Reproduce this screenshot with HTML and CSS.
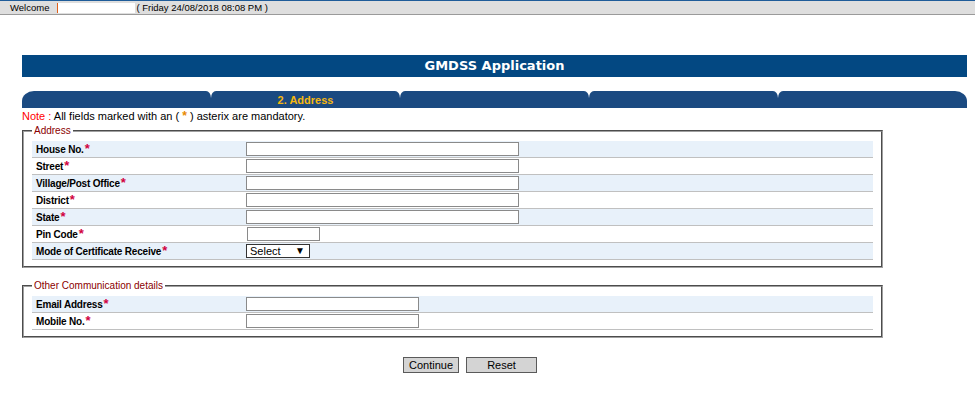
FILE: index.html
```html
<!DOCTYPE html>
<html lang="en">
<head>
    <meta charset="UTF-8">
    <title>GMDSS Application</title>
    <link rel="stylesheet" href="styles.css">
</head>
<body>
    <div class="topbar">
        <span class="welcome">Welcome</span>
        <span class="user-name"></span>
        <span class="login-time">( Friday 24/08/2018 08:08 PM )</span>
    </div>

    <div class="page">
        <div class="title-bar">GMDSS Application</div>

        <div class="steps">
            <div class="step step-first"></div>
            <div class="step step-active">2. Address</div>
            <div class="step"></div>
            <div class="step"></div>
            <div class="step step-last"></div>
        </div>

        <div class="note">
            <span class="note-key">Note :</span> All fields marked with an ( <span class="note-star">*</span> ) asterix are mandatory.
        </div>

        <fieldset class="group">
            <legend>Address</legend>
            <table class="form-table">
                <tr class="row-alt">
                    <td class="label">House No.<span class="req">*</span></td>
                    <td><input type="text" class="field field-long"></td>
                </tr>
                <tr>
                    <td class="label">Street<span class="req">*</span></td>
                    <td><input type="text" class="field field-long"></td>
                </tr>
                <tr class="row-alt">
                    <td class="label">Village/Post Office<span class="req">*</span></td>
                    <td><input type="text" class="field field-long"></td>
                </tr>
                <tr>
                    <td class="label">District<span class="req">*</span></td>
                    <td><input type="text" class="field field-long"></td>
                </tr>
                <tr class="row-alt">
                    <td class="label">State<span class="req">*</span></td>
                    <td><input type="text" class="field field-long"></td>
                </tr>
                <tr>
                    <td class="label">Pin Code<span class="req">*</span></td>
                    <td><input type="text" class="field field-short"></td>
                </tr>
                <tr class="row-alt">
                    <td class="label">Mode of Certificate Receive<span class="req">*</span></td>
                    <td>
                        <span class="select-wrap">
                            <select class="select">
                                <option>Select</option>
                                <option>By Post</option>
                                <option>In Person</option>
                            </select>
                            <span class="select-arrow">&#9660;</span>
                        </span>
                    </td>
                </tr>
            </table>
        </fieldset>

        <fieldset class="group group-second">
            <legend>Other Communication details</legend>
            <table class="form-table">
                <tr class="row-alt">
                    <td class="label">Email Address<span class="req">*</span></td>
                    <td><input type="text" class="field field-mid"></td>
                </tr>
                <tr>
                    <td class="label">Mobile No.<span class="req">*</span></td>
                    <td><input type="text" class="field field-mid"></td>
                </tr>
            </table>
        </fieldset>

        <div class="actions">
            <button type="button" class="btn">Continue</button>
            <button type="button" class="btn btn-reset">Reset</button>
        </div>
    </div>
</body>
</html>
```

FILE: styles.css
```css
body {
    margin: 0;
    font-family: "Liberation Sans", Arial, sans-serif;
    font-size: 10px;
    color: #000;
    background: #fff;
}

.topbar {
    height: 13px;
    border-top: 1px solid #1f5c99;
    border-bottom: 1px solid #9a9a9a;
    background-color: #dedede;
    padding-left: 10px;
    display: flex;
    align-items: center;
    font-size: 9.5px;
    line-height: 13px;
}

.user-name {
    display: inline-block;
    width: 77px;
    height: 10px;
    margin-left: 8px;
    background-color: #fff;
    border-left: 1px solid #e0601a;
}

.login-time {
    margin-left: 1px;
}

.page {
    padding: 40px 8px 0 22px;
}

.title-bar {
    height: 22px;
    line-height: 22px;
    background-color: #034882;
    color: #fff;
    text-align: center;
    font-family: "DejaVu Sans", Verdana, sans-serif;
    font-weight: bold;
    font-size: 13px;
}

.steps {
    display: flex;
    height: 17px;
    margin-top: 14px;
}

.step {
    flex: 1;
    background-color: #1b4a81;
    border-radius: 5px 5px 0 0 / 7px 7px 0 0;
    color: #f5b70f;
    font-weight: bold;
    font-size: 11px;
    text-align: center;
    line-height: 17px;
    padding-top: 1px;
    box-sizing: border-box;
}

.step-first {
    border-radius: 12px 5px 0 0 / 10px 7px 0 0;
}

.step-last {
    border-radius: 5px 12px 0 0 / 7px 10px 0 0;
}

.note {
    margin-top: 1px;
    font-size: 11px;
    line-height: 14px;
    height: 16px;
}

.note-key {
    color: #f00;
}

.note-star {
    color: #e88a00;
    font-weight: bold;
    font-size: 12px;
}

.group {
    width: 861px;
    box-sizing: border-box;
    margin: 0;
    padding: 4px 8px 6px 8px;
    border: 2px groove #a0a0a0;
}

.group legend {
    padding: 0 2px;
    margin-left: 0;
    color: #8b0000;
    font-size: 10px;
    line-height: 12px;
}

.group-second {
    margin-top: 12px;
}

.form-table {
    width: 841px;
    border-collapse: collapse;
}

.form-table td {
    height: 16px;
    padding: 0;
    border-bottom: 1px solid #c0c0c0;
    vertical-align: middle;
}

.form-table .label {
    width: 210px;
    padding-left: 4px;
    font-weight: bold;
    font-size: 10px;
    letter-spacing: -0.2px;
}

.row-alt td {
    background-color: #e8f1fa;
}

.req {
    color: #d1003f;
    font-size: 13px;
    line-height: 10px;
    margin-left: 1px;
}

.field {
    display: block;
    height: 14px;
    box-sizing: border-box;
    margin: 0;
    padding: 0 2px;
    border: 1px solid #8a8a8a;
    background: #fff;
    font-family: "Liberation Sans", Arial, sans-serif;
    font-size: 11px;
}

.field-long {
    width: 273px;
}

.field-short {
    width: 73px;
    margin-left: 1px;
}

.field-mid {
    width: 173px;
}

.select-wrap {
    position: relative;
    display: block;
    width: 64px;
}

.select {
    display: block;
    width: 64px;
    height: 14px;
    box-sizing: border-box;
    margin: 0;
    padding: 0 0 0 3px;
    border: 1px solid #333;
    border-radius: 0;
    background: #fff;
    appearance: none;
    -webkit-appearance: none;
    font-family: "Liberation Sans", Arial, sans-serif;
    font-size: 11px;
    line-height: 12px;
    color: #000;
}

.select-arrow {
    position: absolute;
    right: 5px;
    top: 2px;
    font-size: 10px;
    line-height: 10px;
    pointer-events: none;
}

.actions {
    display: flex;
    gap: 7px;
    margin-top: 19px;
    padding-left: 381px;
}

.btn {
    height: 16px;
    margin: 0;
    padding: 0 5px;
    border: 1px solid #5a5a5a;
    border-radius: 0;
    background-color: #d4d4d4;
    font-family: "Liberation Sans", Arial, sans-serif;
    font-size: 11px;
    line-height: 14px;
    color: #000;
}

.btn-reset {
    width: 71px;
}
```
